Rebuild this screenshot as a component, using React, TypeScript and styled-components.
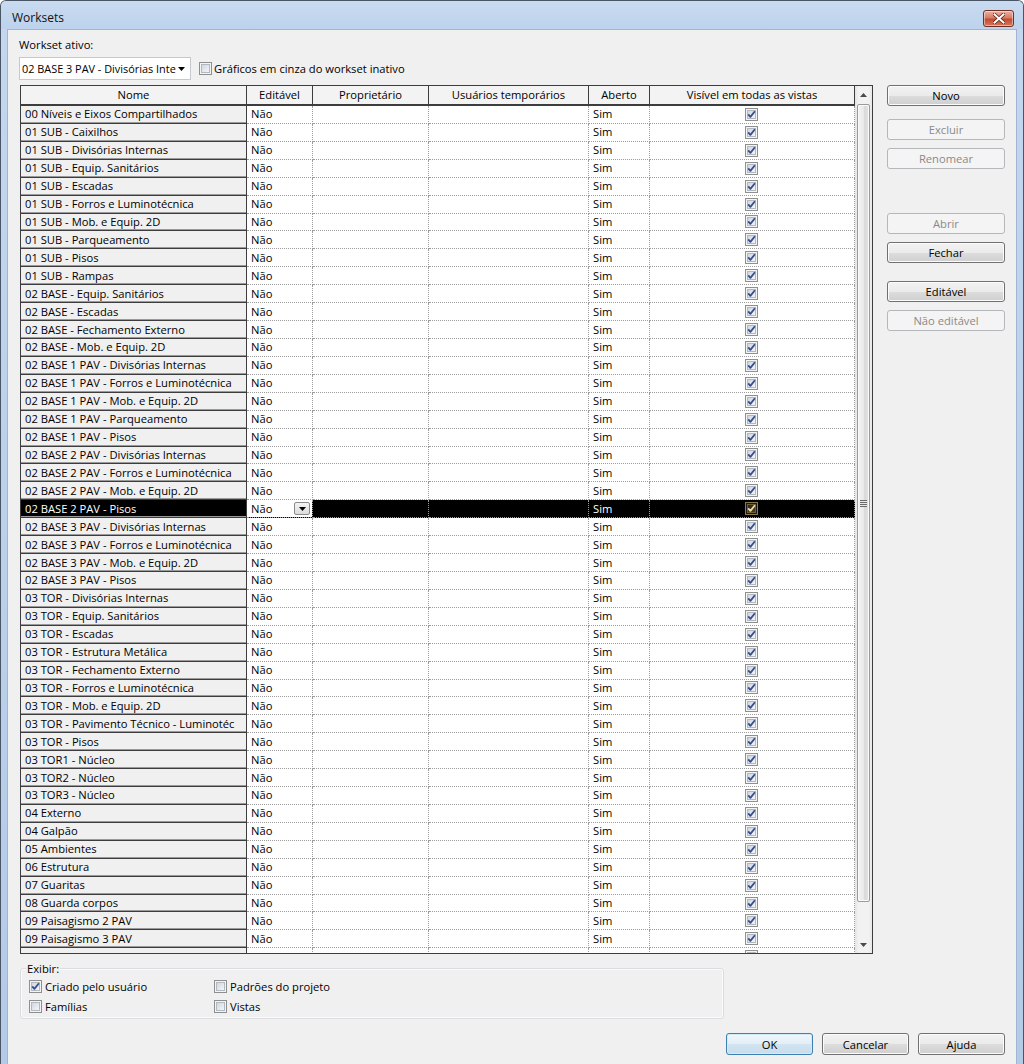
import React, { useId } from 'react';
import styled, { createGlobalStyle, css } from 'styled-components';

const GlobalStyle = createGlobalStyle`
  html, body {
    margin: 0;
    padding: 0;
  }
  body {
    font-family: "Open Sans", "Noto Sans", sans-serif;
    font-size: 11.2px;
    color: #000;
  }
  * {
    box-sizing: border-box;
  }
`;

const COLUMNS = '226px 66px 116px 160px 61px 205px';
const ROW_HEIGHT = 17.93;

const workset = [
  '00 Níveis e Eixos Compartilhados',
  '01 SUB - Caixilhos',
  '01 SUB - Divisórias Internas',
  '01 SUB - Equip. Sanitários',
  '01 SUB - Escadas',
  '01 SUB - Forros e Luminotécnica',
  '01 SUB - Mob. e Equip. 2D',
  '01 SUB - Parqueamento',
  '01 SUB - Pisos',
  '01 SUB - Rampas',
  '02 BASE - Equip. Sanitários',
  '02 BASE - Escadas',
  '02 BASE - Fechamento Externo',
  '02 BASE - Mob. e Equip. 2D',
  '02 BASE 1 PAV - Divisórias Internas',
  '02 BASE 1 PAV - Forros e Luminotécnica',
  '02 BASE 1 PAV - Mob. e Equip. 2D',
  '02 BASE 1 PAV - Parqueamento',
  '02 BASE 1 PAV - Pisos',
  '02 BASE 2 PAV - Divisórias Internas',
  '02 BASE 2 PAV - Forros e Luminotécnica',
  '02 BASE 2 PAV - Mob. e Equip. 2D',
  '02 BASE 2 PAV - Pisos',
  '02 BASE 3 PAV - Divisórias Internas',
  '02 BASE 3 PAV - Forros e Luminotécnica',
  '02 BASE 3 PAV - Mob. e Equip. 2D',
  '02 BASE 3 PAV - Pisos',
  '03 TOR - Divisórias Internas',
  '03 TOR - Equip. Sanitários',
  '03 TOR - Escadas',
  '03 TOR - Estrutura Metálica',
  '03 TOR - Fechamento Externo',
  '03 TOR - Forros e Luminotécnica',
  '03 TOR - Mob. e Equip. 2D',
  '03 TOR - Pavimento Técnico - Luminotéc',
  '03 TOR - Pisos',
  '03 TOR1 - Núcleo',
  '03 TOR2 - Núcleo',
  '03 TOR3 - Núcleo',
  '04 Externo',
  '04 Galpão',
  '05 Ambientes',
  '06 Estrutura',
  '07 Guaritas',
  '08 Guarda corpos',
  '09 Paisagismo 2 PAV',
  '09 Paisagismo 3 PAV',
];

const SELECTED = 22;

const Window = styled.div`
  width: 1024px;
  height: 1064px;
  display: flex;
  flex-direction: column;
  background: linear-gradient(#c4d7ef, #bcd2ec 40%, #b4cbe8);
  border: 1px solid #4a5566;
  border-bottom: none;
  border-radius: 6px 6px 0 0;
  overflow: hidden;
`;

const TitleBar = styled.div`
  height: 28px;
  flex: none;
  display: flex;
  justify-content: space-between;
  align-items: flex-start;
  padding: 9px 9px 0 11px;
  background: linear-gradient(#c9dbf0, #bdd2ec);
`;

const Title = styled.span`
  font-size: 12px;
  line-height: 16px;
  color: #111;
`;

const CloseButton = styled.div`
  width: 31px;
  height: 17px;
  border: 1px solid #6e2f24;
  border-radius: 3px;
  background: linear-gradient(#eab2a3, #d87b64 45%, #c24b32 55%, #d8775c);
  box-shadow: inset 0 0 0 1px rgba(255, 255, 255, 0.45);
  display: flex;
  align-items: center;
  justify-content: center;
`;

const Client = styled.div`
  flex: 1;
  margin: 0 6px;
  background: #f0f0f0;
  border: 1px solid #9fb5d2;
  border-bottom: none;
  padding: 7px 11px 0 11px;
  display: flex;
  flex-direction: column;
`;

const FieldLabel = styled.div`
  line-height: 15px;
  height: 15px;
`;

const TopRow = styled.div`
  margin-top: 5px;
  height: 23px;
  display: flex;
  align-items: center;
  gap: 8px;
`;

const Combo = styled.div`
  width: 172px;
  height: 23px;
  background: #fff;
  border: 1px solid #c6c9ce;
  display: flex;
  align-items: center;
  padding: 0 3px 0 2px;
`;

const ComboText = styled.span`
  flex: 1;
  min-width: 0;
  overflow: hidden;
  white-space: nowrap;
  line-height: 16px;
  font-size: 10.9px;
`;

const ComboArrow = styled.span`
  display: flex;
  width: 11px;
  justify-content: center;
`;

const CheckLabel = styled.label`
  display: flex;
  align-items: center;
  gap: 2px;
  line-height: 15px;
`;

const Main = styled.div`
  margin-top: 5px;
  display: flex;
  align-items: flex-start;
`;

const GridFrame = styled.div`
  margin-left: 1px;
  width: 853px;
  height: 869px;
  border: 1px solid #3d3d3d;
  display: flex;
  background: #fff;
`;

const GridMain = styled.div`
  width: 834px;
  display: flex;
  flex-direction: column;
  overflow: hidden;
`;

const HeaderRow = styled.div`
  display: grid;
  grid-template-columns: ${COLUMNS};
  height: 20px;
  flex: none;
`;

const HeaderCell = styled.div`
  background: #f3f3f3;
  border-right: 1px solid #3d3d3d;
  border-bottom: 2px solid #3d3d3d;
  text-align: center;
  line-height: 18px;
  white-space: nowrap;
  overflow: hidden;
`;

const Body = styled.div`
  flex: 1;
  overflow: hidden;
`;

const Row = styled.div<{ $selected?: boolean }>`
  display: grid;
  grid-template-columns: ${COLUMNS};
  height: ${ROW_HEIGHT}px;
  flex: none;
  background: ${({ $selected }) => ($selected ? '#000' : '#fff')};
  color: ${({ $selected }) => ($selected ? '#fff' : '#000')};
`;

const Cell = styled.div`
  border-right: 1px dotted #9c9c9c;
  border-bottom: 1px dotted #9c9c9c;
  padding-left: 4px;
  line-height: 16px;
  white-space: nowrap;
  overflow: hidden;
  display: flex;
  align-items: center;
`;

const NameCell = styled(Cell)<{ $selected?: boolean }>`
  border-right: 1px solid #3d3d3d;
  border-bottom: 1px solid #3d3d3d;
  background: ${({ $selected }) => ($selected ? '#000' : '#f0f0f0')};
  box-shadow: inset 0 -1px 0 #9a9a9a;
`;

const CheckCell = styled(Cell)`
  justify-content: center;
  padding-left: 0;
  padding-right: 1px;
`;

const CellCombo = styled.div`
  flex: 1;
  height: 100%;
  margin-left: -4px;
  background: #fff;
  color: #000;
  display: flex;
  align-items: center;
  padding: 0 2px 0 4px;
  justify-content: space-between;
`;

const CellComboButton = styled.span`
  width: 16px;
  height: 13px;
  border: 1px solid #8a8a8a;
  border-radius: 2px;
  background: linear-gradient(#f4f4f4, #dcdcdc);
  display: flex;
  align-items: center;
  justify-content: center;
`;

const Scrollbar = styled.div`
  width: 17px;
  display: flex;
  flex-direction: column;
  background: linear-gradient(to right, #e3e3e3, #f2f2f2 20%, #f2f2f2 80%, #e8e8e8);
`;

const ScrollArrow = styled.div`
  height: 17px;
  flex: none;
  display: flex;
  align-items: center;
  justify-content: center;
`;

const Track = styled.div`
  flex: 1;
  padding: 1px 2px 0 2px;
`;

const Thumb = styled.div`
  width: 13px;
  border: 1px solid #9a9a9a;
  border-radius: 2px;
  background: linear-gradient(to right, #f4f4f4, #e9e9e9 50%, #d9d9d9 51%, #e2e2e2);
  box-shadow: inset 0 0 0 1px #fafafa;
  display: flex;
  align-items: center;
  justify-content: center;
`;

const Grip = styled.div`
  width: 7px;
  height: 7px;
  background: repeating-linear-gradient(#6b6b6b 0 1px, #e8e8e8 1px 2px);
`;

const SideButtons = styled.div`
  margin-left: 14px;
  width: 118px;
  display: flex;
  flex-direction: column;
`;

const buttonFace = css`
  border: 1px solid #707070;
  border-radius: 3px;
  background: linear-gradient(#f2f2f2, #ebebeb 50%, #dddddd 51%, #cfcfcf);
  box-shadow: inset 0 0 0 1px #fcfcfc;
  color: #000;
`;

const disabledFace = css`
  border: 1px solid #b4b8bb;
  border-radius: 3px;
  background: #f4f4f4;
  color: #8a8a8a;
`;

const Button = styled.div<{ $gap?: number; $disabled?: boolean }>`
  margin-top: ${({ $gap }) => $gap ?? 0}px;
  height: 21px;
  display: flex;
  align-items: center;
  justify-content: center;
  line-height: 15px;
  ${({ $disabled }) => ($disabled ? disabledFace : buttonFace)}
`;

const GroupBox = styled.div`
  margin-top: 14px;
  margin-left: 1px;
  width: 704px;
  height: 51px;
  border: 1px solid #d9dde0;
  border-radius: 3px;
  box-shadow: inset 0 0 0 1px #fbfbfb;
`;

const Legend = styled.div`
  margin: -7px 0 0 5px;
  padding: 0 1px;
  width: fit-content;
  line-height: 14px;
  background: #f0f0f0;
`;

const Options = styled.div`
  margin-top: 0;
  padding-left: 8px;
  display: grid;
  grid-template-columns: 185px 200px;
  grid-auto-rows: 20px;
`;

const Option = styled(CheckLabel)`
  gap: 3px;
`;

const Footer = styled.div`
  margin-top: 14px;
  display: flex;
  justify-content: flex-end;
  gap: 9px;
`;

const DialogButton = styled.div<{ $default?: boolean }>`
  width: 87px;
  height: 22px;
  display: flex;
  align-items: center;
  justify-content: center;
  ${buttonFace}
  ${({ $default }) =>
    $default &&
    css`
      border-color: #3c7fb1;
      background: linear-gradient(#f1f7fb, #e3eef6 50%, #d2e4f1 51%, #c8dcec);
      box-shadow: inset 0 0 0 1px #d0ecfa;
    `}
`;

const CheckBox: React.FC<{ checked?: boolean; inverted?: boolean }> = ({ checked, inverted }) => {
  const id = useId();
  const outer = inverted ? '#8c7a4a' : '#8e8f8f';
  const from = inverted ? '#2a261a' : '#cfd5de';
  const to = inverted ? '#463c22' : '#f6f7f9';
  const mark = inverted ? '#f2dc96' : '#34508c';
  return (
    <svg width="13" height="13" viewBox="0 0 13 13">
      <defs>
        <linearGradient id={id} x1="0" y1="0" x2="1" y2="1">
          <stop offset="0" stopColor={from} />
          <stop offset="1" stopColor={to} />
        </linearGradient>
      </defs>
      <rect x="0.5" y="0.5" width="12" height="12" fill={inverted ? '#1a1a1a' : '#f4f4f4'} stroke={outer} />
      <rect x="2.5" y="2.5" width="8" height="8" fill={`url(#${id})`} stroke={inverted ? '#6e5f38' : '#b2b8c0'} />
      {checked && (
        <path d="M3.2 6.4 L5.4 8.9 L9.9 3.3" fill="none" stroke={mark} strokeWidth="1.8" strokeLinejoin="round" />
      )}
    </svg>
  );
};

const DownTriangle: React.FC<{ color?: string }> = ({ color = '#000' }) => (
  <svg width="7" height="4" viewBox="0 0 7 4">
    <path d="M0 0 H7 L3.5 4 Z" fill={color} />
  </svg>
);

const UpTriangle: React.FC = () => (
  <svg width="7" height="4" viewBox="0 0 7 4">
    <path d="M0 4 H7 L3.5 0 Z" fill="#4a4a4a" />
  </svg>
);

const CloseGlyph: React.FC = () => (
  <svg width="12" height="11" viewBox="0 0 12 11">
    <path d="M1.5 1.5 L10.5 9.5 M10.5 1.5 L1.5 9.5" stroke="#5a2418" strokeWidth="3.6" strokeLinecap="square" />
    <path d="M1.5 1.5 L10.5 9.5 M10.5 1.5 L1.5 9.5" stroke="#fff" strokeWidth="2" strokeLinecap="square" />
  </svg>
);

const headers = ['Nome', 'Editável', 'Proprietário', 'Usuários temporários', 'Aberto', 'Visível em todas as vistas'];

const sideButtons = [
  { label: 'Novo', gap: 0 },
  { label: 'Excluir', gap: 13, disabled: true },
  { label: 'Renomear', gap: 8, disabled: true },
  { label: 'Abrir', gap: 44, disabled: true },
  { label: 'Fechar', gap: 8 },
  { label: 'Editável', gap: 18 },
  { label: 'Não editável', gap: 8, disabled: true },
];

const App: React.FC = () => {
  const visibleRows = 47;
  const totalRows = 49;
  const trackHeight = 832;
  const thumbHeight = Math.round((trackHeight * visibleRows) / totalRows);

  return (
    <>
      <GlobalStyle />
      <Window>
        <TitleBar>
          <Title>Worksets</Title>
          <CloseButton>
            <CloseGlyph />
          </CloseButton>
        </TitleBar>
        <Client>
          <FieldLabel>Workset ativo:</FieldLabel>
          <TopRow>
            <Combo>
              <ComboText>02 BASE 3 PAV - Divisórias Inte</ComboText>
              <ComboArrow>
                <DownTriangle />
              </ComboArrow>
            </Combo>
            <CheckLabel>
              <CheckBox />
              Gráficos em cinza do workset inativo
            </CheckLabel>
          </TopRow>
          <Main>
            <GridFrame>
              <GridMain>
                <HeaderRow>
                  {headers.map((h) => (
                    <HeaderCell key={h}>{h}</HeaderCell>
                  ))}
                </HeaderRow>
                <Body>
                  {workset.map((name, i) => {
                    const selected = i === SELECTED;
                    return (
                      <Row key={name} $selected={selected}>
                        <NameCell $selected={selected}>{name}</NameCell>
                        <Cell>
                          {selected ? (
                            <CellCombo>
                              Não
                              <CellComboButton>
                                <DownTriangle />
                              </CellComboButton>
                            </CellCombo>
                          ) : (
                            'Não'
                          )}
                        </Cell>
                        <Cell />
                        <Cell />
                        <Cell>Sim</Cell>
                        <CheckCell>
                          <CheckBox checked inverted={selected} />
                        </CheckCell>
                      </Row>
                    );
                  })}
                  {/* next row, only its top edge shows above the frame */}
                  <Row>
                    <NameCell />
                    <Cell />
                    <Cell />
                    <Cell />
                    <Cell />
                    <CheckCell>
                      <CheckBox checked />
                    </CheckCell>
                  </Row>
                </Body>
              </GridMain>
              <Scrollbar>
                <ScrollArrow>
                  <UpTriangle />
                </ScrollArrow>
                <Track>
                  <Thumb style={{ height: thumbHeight }}>
                    <Grip />
                  </Thumb>
                </Track>
                <ScrollArrow>
                  <DownTriangle color="#4a4a4a" />
                </ScrollArrow>
              </Scrollbar>
            </GridFrame>
            <SideButtons>
              {sideButtons.map((b) => (
                <Button key={b.label} $gap={b.gap} $disabled={b.disabled}>
                  {b.label}
                </Button>
              ))}
            </SideButtons>
          </Main>
          <GroupBox>
            <Legend>Exibir:</Legend>
            <Options>
              <Option>
                <CheckBox checked />
                Criado pelo usuário
              </Option>
              <Option>
                <CheckBox />
                Padrões do projeto
              </Option>
              <Option>
                <CheckBox />
                Famílias
              </Option>
              <Option>
                <CheckBox />
                Vistas
              </Option>
            </Options>
          </GroupBox>
          <Footer>
            <DialogButton $default>OK</DialogButton>
            <DialogButton>Cancelar</DialogButton>
            <DialogButton>Ajuda</DialogButton>
          </Footer>
        </Client>
      </Window>
    </>
  );
};

export default App;
